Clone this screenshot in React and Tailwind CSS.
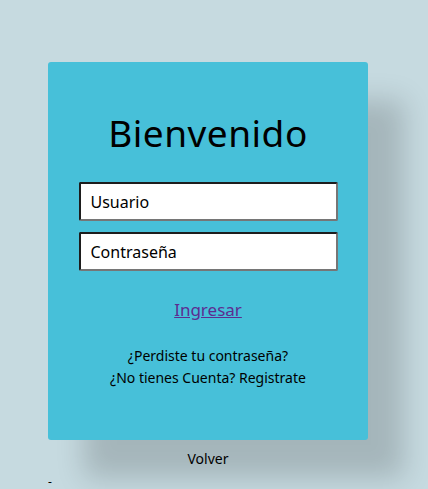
export default function App() {
  return (
    <div className="min-h-[489px] bg-[#c6dae0] pt-[62px] text-black" style={{ fontFamily: '"Noto Sans", "Open Sans", sans-serif' }}>
      <div className="ml-[48px] w-[320px] h-[378px] rounded-[3px] bg-[#47c0d9] shadow-[36px_38px_28px_rgba(0,0,0,0.17)] flex flex-col items-center">
        <h1 className="mt-[46px] text-[37px] leading-[50px] tracking-[0.5px]">Bienvenido</h1>
        <div className="mt-[24px] w-[259px] flex flex-col gap-[11px]">
          <input
            readOnly
            value="Usuario"
            className="h-[39px] w-full bg-white rounded-[2px] border-2 border-t-[#1d1d1d] border-l-[#1d1d1d] border-b-[#767676] border-r-[#767676] px-[10px] text-[16px] outline-none"
          />
          <input
            readOnly
            value="Contraseña"
            className="h-[39px] w-full bg-white rounded-[2px] border-2 border-t-[#1d1d1d] border-l-[#1d1d1d] border-b-[#767676] border-r-[#767676] px-[10px] text-[16px] outline-none"
          />
        </div>
        <a href="#" className="mt-[27px] text-[17px] leading-[24px] text-[#5c2d91] underline">Ingresar</a>
        <div className="mt-[23px] text-[14px] leading-[22px] text-center">
          <p>¿Perdiste tu contraseña?</p>
          <p>¿No tienes Cuenta? Registrate</p>
        </div>
      </div>
      <div className="w-[320px] ml-[48px] mt-[10px] text-center text-[14px] leading-[18px]">Volver</div>
      <div className="ml-[48px] mt-[7px] text-[12px] leading-[14px]">-</div>
    </div>
  );
}
